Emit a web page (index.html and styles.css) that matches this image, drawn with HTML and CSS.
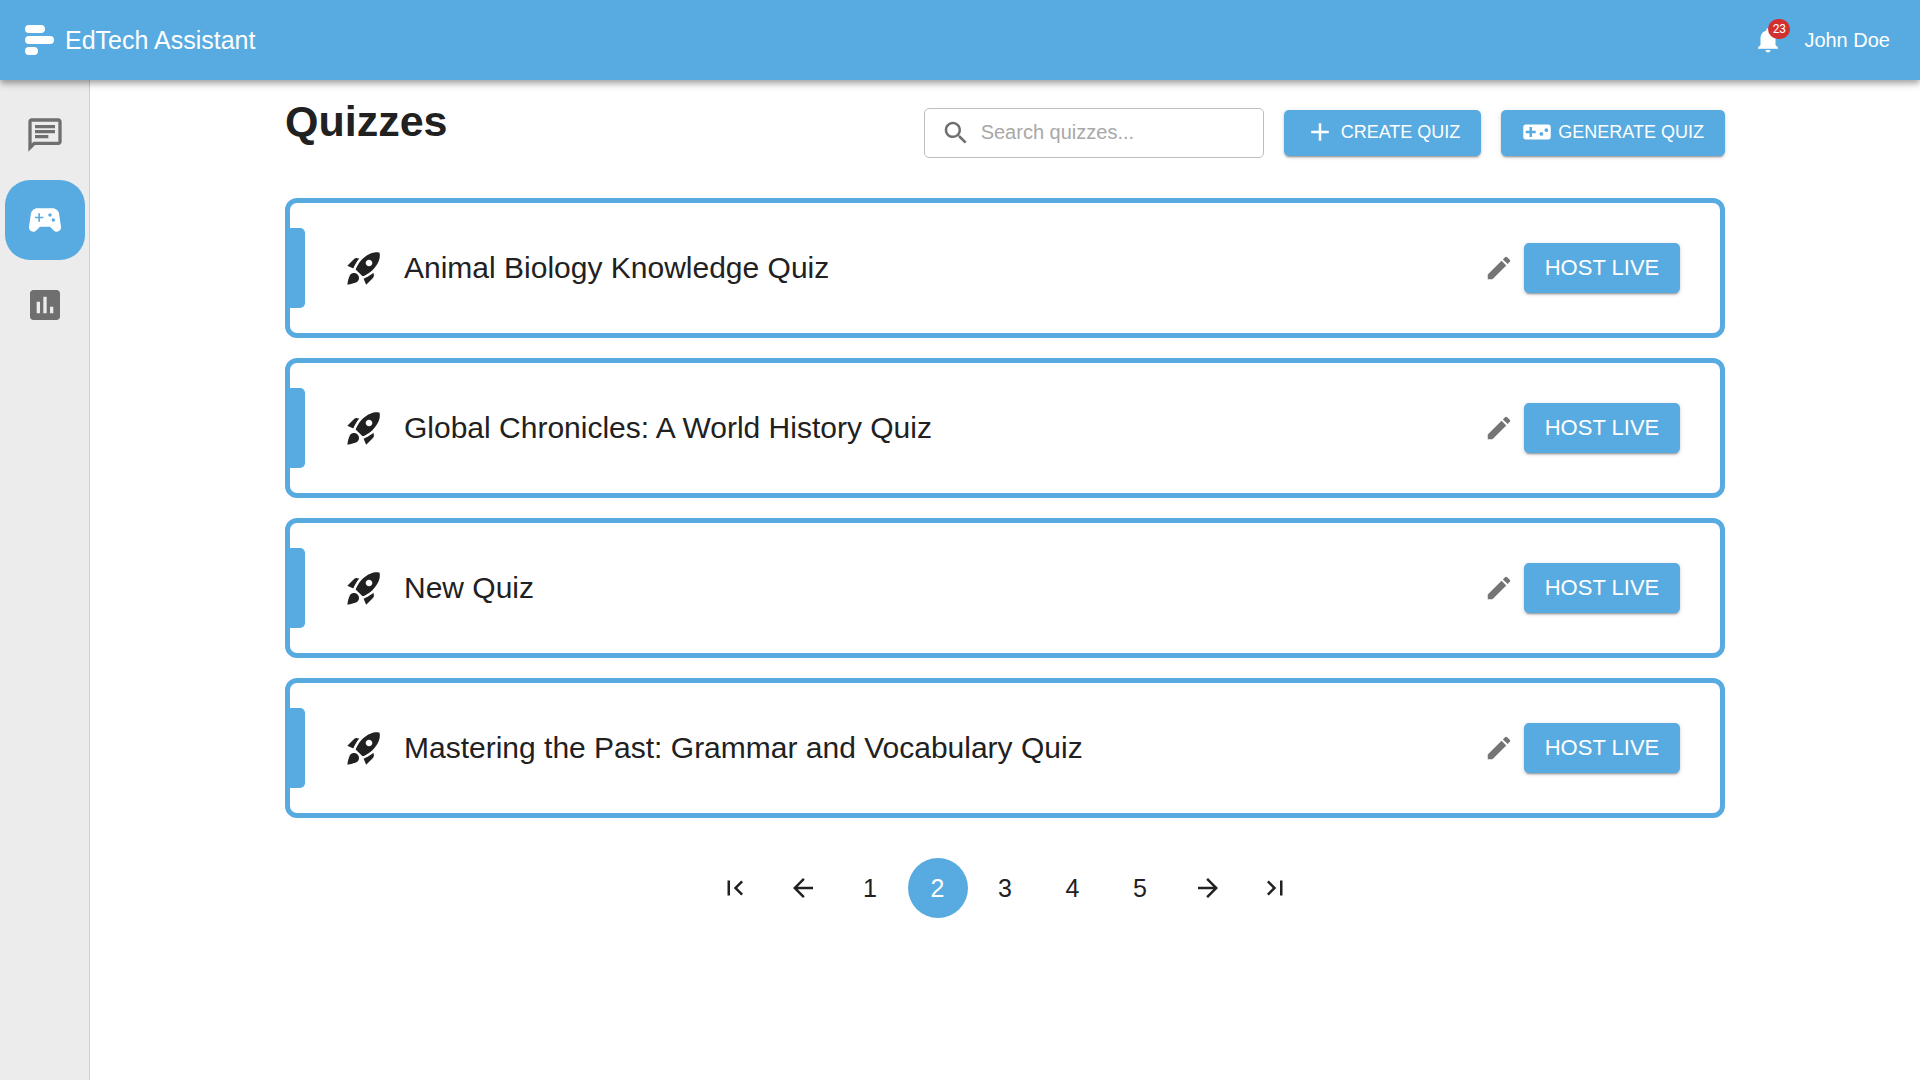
FILE: index.html
```html
<!DOCTYPE html>
<html lang="en">
<head>
<meta charset="utf-8">
<title>EdTech Assistant</title>
<link rel="stylesheet" href="styles.css">
</head>
<body>
<svg class="sprite" aria-hidden="true">
  <symbol id="rocket" viewBox="0 0 24 24"><path d="M9.19 6.35c-2.04 2.29-3.44 5.58-3.57 5.89L2 10.69l4.05-4.05c.47-.47 1.15-.68 1.81-.55l1.33.26zM11.17 17s3.74-1.55 5.89-3.7c5.4-5.4 4.5-9.62 4.21-10.57-.95-.3-5.17-1.19-10.57 4.21C8.55 9.09 7 12.83 7 12.83L11.17 17zm6.48-2.19c-2.29 2.04-5.58 3.44-5.89 3.57L13.31 22l4.05-4.05c.47-.47.68-1.15.55-1.81l-.26-1.33zM9 18c0 .83-.34 1.58-.88 2.12C6.94 21.3 2 22 2 22s.7-4.94 1.88-6.12C4.42 15.34 5.17 15 6 15c1.66 0 3 1.34 3 3zm4-9c0-1.1.9-2 2-2s2 .9 2 2-.9 2-2 2-2-.9-2-2z" fill-rule="evenodd"/></symbol>
  <symbol id="edit" viewBox="0 0 24 24"><path d="M3 17.25V21h3.75L17.81 9.94l-3.75-3.75L3 17.25zM20.71 7.04c.39-.39.39-1.02 0-1.41l-2.34-2.34a.9959.9959 0 0 0-1.41 0l-1.83 1.83 3.75 3.75 1.83-1.83z"/></symbol>
</svg>

<header class="topbar">
  <a class="brand" href="#">
    <svg class="logo" viewBox="0 0 30 30" aria-hidden="true"><rect width="20" height="8" rx="4"/><rect y="11" width="29" height="8" rx="4"/><rect y="22" width="13" height="8" rx="4"/></svg>
    <span>EdTech Assistant</span>
  </a>
  <div class="account">
    <button class="bell" type="button" aria-label="Notifications">
      <svg class="icon-m" viewBox="0 0 24 24"><path d="M12 22c1.1 0 2-.9 2-2h-4c0 1.1.89 2 2 2zm6-6v-5c0-3.07-1.64-5.64-4.5-6.32V4c0-.83-.67-1.5-1.5-1.5s-1.5.67-1.5 1.5v.68C7.63 5.36 6 7.92 6 11v5l-2 2v1h16v-1l-2-2z"/></svg>
      <span class="badge">23</span>
    </button>
    <a class="user" href="#">John Doe</a>
  </div>
</header>

<div class="shell">
  <nav class="sidebar" aria-label="Sections">
    <a class="side-link" href="#" aria-label="Chat"><svg class="icon-l" viewBox="0 0 24 24"><path d="M4 4h16v12H5.17L4 17.17V4m0-2c-1.1 0-1.99.9-1.99 2L2 22l4-4h14c1.1 0 2-.9 2-2V4c0-1.100-.9-2-2-2H4zm2 10h8v2H6v-2zm0-3h12v2H6V9zm0-3h12v2H6V6z"/></svg></a>
    <a class="side-link active" href="#" aria-label="Quizzes" aria-current="page"><svg class="icon-l" viewBox="0 0 24 24"><path d="M21.58 16.09l-1.09-7.66C20.21 6.46 18.52 5 16.53 5H7.47C5.48 5 3.79 6.46 3.51 8.43l-1.09 7.66C2.2 17.63 3.39 19 4.94 19c.68 0 1.32-.27 1.8-.75L9 16h6l2.25 2.25c.48.48 1.13.75 1.8.75 1.56 0 2.75-1.37 2.53-2.91zM11 11H9v2H8v-2H6v-1h2V8h1v2h2v1zm4-1c-.55 0-1-.45-1-1s.45-1 1-1 1 .45 1 1-.45 1-1 1zm2 3c-.55 0-1-.45-1-1s.45-1 1-1 1 .45 1 1-.45 1-1 1z"/></svg></a>
    <a class="side-link" href="#" aria-label="Reports"><svg class="icon-l" viewBox="0 0 24 24"><path d="M19 3H5c-1.100 0-2 .9-2 2v14c0 1.100.9 2 2 2h14c1.100 0 2-.9 2-2V5c0-1.100-.9-2-2-2zM9 17H7v-7h2v7zm4 0h-2V7h2v10zm4 0h-2v-4h2v4z"/></svg></a>
  </nav>

  <main class="content">
    <div class="toolbar">
      <h1>Quizzes</h1>
      <div class="actions">
        <label class="search">
          <svg class="icon-m" viewBox="0 0 24 24" aria-hidden="true"><path d="M15.5 14h-.79l-.28-.27C15.410 12.590 16 11.110 16 9.500 16 5.910 13.090 3 9.500 3S3 5.910 3 9.500 5.910 16 9.500 16c1.610 0 3.090-.59 4.230-1.570l.27.28v.79l5 4.990L20.490 19l-4.990-5zm-6 0C7.010 14 5 11.990 5 9.500S7.010 5 9.500 5 14 7.010 14 9.500 11.990 14 9.500 14z"/></svg>
          <input type="search" placeholder="Search quizzes..." aria-label="Search quizzes">
        </label>
        <button class="btn btn-tool" type="button"><svg class="icon-m" viewBox="0 0 24 24" aria-hidden="true"><path d="M19 13h-6v6h-2v-6H5v-2h6V5h2v6h6v2z"/></svg>CREATE QUIZ</button>
        <button class="btn btn-tool" type="button"><svg class="icon-m" viewBox="0 0 24 24" aria-hidden="true"><path d="M21 6H3c-1.100 0-2 .9-2 2v8c0 1.100.9 2 2 2h18c1.100 0 2-.9 2-2V8c0-1.100-.9-2-2-2zm-10 7H8v3H6v-3H3v-2h3V8h2v3h3v2zm4.500 2c-.83 0-1.500-.67-1.500-1.500s.67-1.500 1.500-1.500 1.500.67 1.500 1.500-.67 1.500-1.500 1.500zm4-3c-.83 0-1.500-.67-1.500-1.500S18.670 9 19.500 9s1.500.67 1.500 1.500-.67 1.500-1.500 1.500z"/></svg>GENERATE QUIZ</button>
      </div>
    </div>

    <ul class="quizzes">
      <li class="quiz">
        <svg class="icon-l" aria-hidden="true"><use href="#rocket"/></svg>
        <h2>Animal Biology Knowledge Quiz</h2>
        <button class="edit" type="button" aria-label="Edit"><svg class="icon-m"><use href="#edit"/></svg></button>
        <button class="btn btn-host" type="button">HOST LIVE</button>
      </li>
      <li class="quiz">
        <svg class="icon-l" aria-hidden="true"><use href="#rocket"/></svg>
        <h2>Global Chronicles: A World History Quiz</h2>
        <button class="edit" type="button" aria-label="Edit"><svg class="icon-m"><use href="#edit"/></svg></button>
        <button class="btn btn-host" type="button">HOST LIVE</button>
      </li>
      <li class="quiz">
        <svg class="icon-l" aria-hidden="true"><use href="#rocket"/></svg>
        <h2>New Quiz</h2>
        <button class="edit" type="button" aria-label="Edit"><svg class="icon-m"><use href="#edit"/></svg></button>
        <button class="btn btn-host" type="button">HOST LIVE</button>
      </li>
      <li class="quiz">
        <svg class="icon-l" aria-hidden="true"><use href="#rocket"/></svg>
        <h2>Mastering the Past: Grammar and Vocabulary Quiz</h2>
        <button class="edit" type="button" aria-label="Edit"><svg class="icon-m"><use href="#edit"/></svg></button>
        <button class="btn btn-host" type="button">HOST LIVE</button>
      </li>
    </ul>

    <nav class="pager" aria-label="Pages">
      <button type="button" aria-label="First page"><svg class="icon-m" viewBox="0 0 24 24"><path d="M18.410 16.590L13.820 12l4.590-4.590L17 6l-6 6 6 6zM6 6h2v12H6z"/></svg></button>
      <button type="button" aria-label="Previous page"><svg class="icon-m" viewBox="0 0 24 24"><path d="M20 11H7.830l5.590-5.590L12 4l-8 8 8 8 1.410-1.410L7.830 13H20v-2z"/></svg></button>
      <button type="button">1</button>
      <button type="button" class="current" aria-current="page">2</button>
      <button type="button">3</button>
      <button type="button">4</button>
      <button type="button">5</button>
      <button type="button" aria-label="Next page"><svg class="icon-m" viewBox="0 0 24 24"><path d="M12 4l-1.410 1.410L16.170 11H4v2h12.170l-5.580 5.590L12 20l8-8z"/></svg></button>
      <button type="button" aria-label="Last page"><svg class="icon-m" viewBox="0 0 24 24"><path d="M5.590 7.410L10.180 12l-4.590 4.590L7 18l6-6-6-6zM16 6h2v12h-2z"/></svg></button>
    </nav>
  </main>
</div>
</body>
</html>
```
FILE: styles.css
```css
:root {
  --blue: #58abe0;
  --ink: #212121;
  --grey: #6f6f6f;
}

* { box-sizing: border-box; }

body {
  margin: 0;
  min-height: 100vh;
  display: flex;
  flex-direction: column;
  background: #fff;
  color: var(--ink);
  font-family: "Liberation Sans", Arial, sans-serif;
  font-size: 20px;
}

h1, h2, ul { margin: 0; padding: 0; }
a { color: inherit; text-decoration: none; }
button, input { font: inherit; color: inherit; }
button { padding: 0; border: 0; background: none; cursor: pointer; }
svg { display: block; flex: none; fill: currentColor; }

.sprite { display: none; }
.icon-m { width: 30px; height: 30px; }
.icon-l { width: 40px; height: 40px; }

.topbar {
  position: relative;
  height: 80px;
  padding: 0 30px 0 25px;
  display: flex;
  align-items: center;
  justify-content: space-between;
  background: var(--blue);
  color: #fff;
  box-shadow: 0 3px 5px -1px rgba(0, 0, 0, .2), 0 5px 6px rgba(0, 0, 0, .14), 0 1px 12px rgba(0, 0, 0, .12);
}

.brand { display: flex; align-items: center; gap: 10px; font-size: 25px; }
.logo { width: 30px; height: 30px; }
.account { display: flex; align-items: center; gap: 21px; }
.bell { position: relative; }

.badge {
  position: absolute;
  top: -6px;
  right: -7px;
  min-width: 22px;
  height: 20px;
  border-radius: 10px;
  background: #d32f2f;
  font: 400 12px/20px Roboto, sans-serif;
  text-align: center;
}

.shell { flex: 1; display: flex; }

.sidebar {
  width: 90px;
  padding: 15px 0;
  display: flex;
  flex-direction: column;
  align-items: center;
  gap: 5px;
  background: #ececec;
  border-right: 1px solid #cfcfcf;
}

.side-link {
  width: 80px;
  height: 80px;
  display: grid;
  place-items: center;
  border-radius: 25px;
  color: var(--grey);
}

.side-link.active { background: var(--blue); color: #fff; }

.content {
  flex: 1;
  max-width: 1440px;
  margin: 0 auto;
  padding: 20px 0;
}

.toolbar { display: flex; justify-content: space-between; }
.toolbar h1 { font-size: 43px; line-height: 42px; }
.actions { display: flex; align-items: center; gap: 20px; padding: 8px 0; }

.search {
  width: 340px;
  height: 50px;
  padding: 0 16px;
  display: flex;
  align-items: center;
  gap: 10px;
  border: 1px solid #bdbdbd;
  border-radius: 5px;
  color: var(--grey);
}

.search input {
  flex: 1;
  min-width: 0;
  padding: 0 0 2px;
  border: 0;
  outline: 0;
  background: none;
  color: var(--ink);
}

.search input::placeholder { color: #a8a8a8; }

.btn {
  display: flex;
  align-items: center;
  justify-content: center;
  border-radius: 5px;
  background: var(--blue);
  color: #fff;
  box-shadow: 0 3px 1px -2px rgba(0, 0, 0, .2), 0 2px 2px rgba(0, 0, 0, .14), 0 1px 5px rgba(0, 0, 0, .12);
}

.btn-tool { height: 46px; padding: 0 21px 2px; gap: 6px; font-size: 18px; }
.btn-host { min-width: 156px; height: 50px; font-size: 22px; }

.quizzes {
  margin-top: 32px;
  display: flex;
  flex-direction: column;
  gap: 20px;
  list-style: none;
}

.quiz {
  height: 140px;
  padding-right: 40px;
  display: flex;
  align-items: center;
  border: 5px solid var(--blue);
  border-radius: 12px;
}

.quiz::before {
  content: "";
  width: 15px;
  height: 80px;
  margin-right: 39px;
  border-radius: 0 5px 5px 0;
  background: var(--blue);
}

.quiz h2 { flex: 1; margin-left: 20px; font-size: 30px; font-weight: 400; }
.edit { margin-right: 10px; color: #757575; }

.pager {
  max-width: 600px;
  margin: 40px auto 0;
  display: flex;
  justify-content: space-between;
}

.pager button {
  width: 60px;
  height: 60px;
  display: grid;
  place-items: center;
  border-radius: 50%;
  font-size: 25px;
}

.pager .current { background: var(--blue); color: #fff; }
```
